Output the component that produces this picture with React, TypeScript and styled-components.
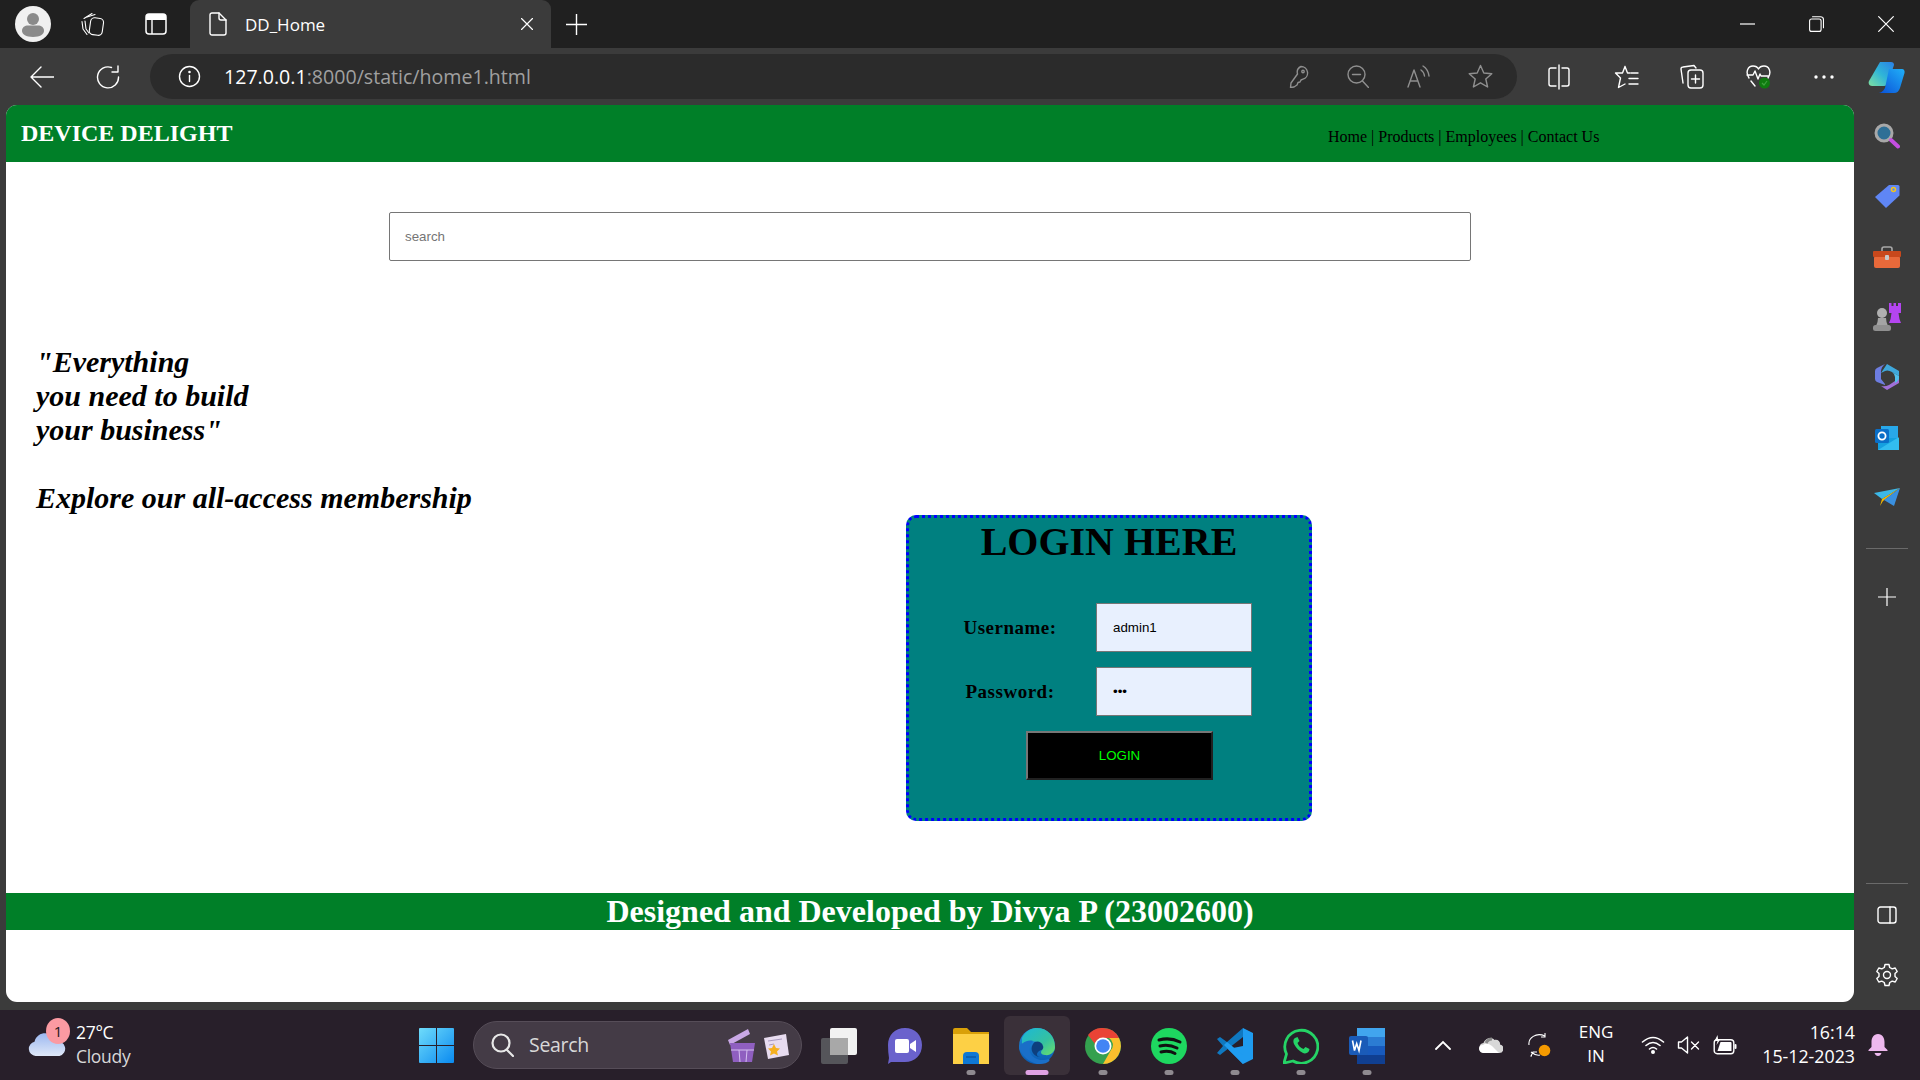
import React from "react";
import styled, { createGlobalStyle } from "styled-components";

const Global = createGlobalStyle`
  html, body { margin: 0; padding: 0; height: 100%; background: #3b3b3b; overflow: hidden; }
  * { box-sizing: border-box; }
  svg { display: block; flex: none; }
`;

const UI_FONT = `"Open Sans", "Noto Sans", sans-serif`;
const PAGE_FONT = `"Liberation Serif", "Times New Roman", serif`;
const GREEN = "#007f28";

const Screen = styled.div`
  width: 1920px;
  height: 1080px;
  display: flex;
  flex-direction: column;
  background: #3b3b3b;
  font-family: ${UI_FONT};
  overflow: hidden;
`;

/* browser chrome */
const TitleBar = styled.div`
  height: 48px;
  background: #202020;
  display: flex;
  align-items: center;
  padding-left: 15px;
`;
const Avatar = styled.div`
  width: 36px;
  height: 36px;
  border-radius: 50%;
  background: #f0f0f0;
  overflow: hidden;
`;
const TitleIcon = styled.div<{ $left: number }>`
  margin-left: ${(p) => p.$left}px;
  display: flex;
`;
const Tab = styled.div`
  width: 361px;
  height: 48px;
  margin-left: 23px;
  background: #3b3b3b;
  border-radius: 9px 9px 0 0;
  display: flex;
  align-items: center;
  padding: 0 18px 0 19px;
  color: #fff;
  font-size: 17px;
`;
const TabTitle = styled.span`
  margin-left: 18px;
  flex: 1;
`;
const WindowControls = styled.div`
  margin-left: auto;
  display: flex;
  align-items: center;
  padding-right: 26px;
  gap: 54px;
`;
const Toolbar = styled.div`
  height: 57px;
  display: flex;
  align-items: center;
  padding: 0 0 0 30px;
`;
const ToolSlot = styled.div<{ $left?: number }>`
  margin-left: ${(p) => p.$left ?? 0}px;
  display: flex;
`;
const AddressPill = styled.div`
  flex: none;
  width: 1367px;
  height: 45px;
  margin-left: 30px;
  margin-top: -1px;
  border-radius: 23px;
  background: #2b2b2b;
  display: flex;
  align-items: center;
  padding: 0 24px 0 28px;
`;
const Url = styled.div`
  margin-left: 23px;
  font-size: 19.6px;
  color: #a0a0a0;
  white-space: nowrap;
  b { font-weight: 400; color: #fff; }
`;
const PillTools = styled.div`
  margin-left: auto;
  display: flex;
  align-items: center;
  gap: 38px;
`;

/* middle */
const Middle = styled.div`
  flex: 1;
  display: flex;
  min-height: 0;
`;
const Page = styled.main`
  width: 1848px;
  height: 897px;
  margin-left: 6px;
  background: #fff;
  border-radius: 11px;
  overflow: hidden;
  font-family: ${PAGE_FONT};
  color: #000;
`;
const NavBar = styled.header`
  height: 57px;
  background: ${GREEN};
  display: flex;
  align-items: center;
  padding-left: 15px;
`;
const Brand = styled.div`
  font-size: 24px;
  font-weight: 700;
  color: #fff;
  width: 1307px;
`;
const NavLinks = styled.nav`
  font-size: 16px;
  white-space: nowrap;
  margin-top: 6px;
  a { color: #000; text-decoration: none; }
`;
const SearchRow = styled.div`
  display: flex;
  justify-content: center;
  padding-top: 50px;
`;
const SearchInput = styled.input`
  width: 1082px;
  height: 49px;
  border: 1px solid #767676;
  border-radius: 2px;
  padding: 0 15px;
  font: 13.33px "Liberation Sans", Arial, sans-serif;
  background: #fff;
  &::placeholder { color: #757575; }
`;
const Slogan = styled.div`
  margin-top: 84px;
  padding-left: 30px;
  font-size: 30px;
  line-height: 34px;
  font-weight: 700;
  font-style: italic;
  height: 170px;
`;
const LoginCard = styled.form`
  width: 406px;
  height: 306px;
  margin-left: 900px;
  background: #008080;
  border: 3px dotted #0000ff;
  border-radius: 10px;
`;
const LoginTitle = styled.h1`
  margin: 0;
  padding-top: 1px;
  text-align: center;
  font-size: 40px;
  line-height: 46px;
  font-weight: 700;
  color: #000;
`;
const FormGrid = styled.div`
  margin: 38px 0 0 15px;
  display: grid;
  grid-template-columns: 172px 156px;
  row-gap: 15px;
  align-items: center;
`;
const FieldLabel = styled.label`
  text-align: center;
  font-size: 19px;
  font-weight: 700;
  letter-spacing: 0.5px;
`;
const FieldInput = styled.input`
  width: 156px;
  height: 49px;
  border: 1px solid #767676;
  padding: 0 16px;
  background: #e8f0fe;
  color: #000;
  font: 13.33px "Liberation Sans", Arial, sans-serif;
  outline: none;
`;
const LoginButton = styled.button`
  display: block;
  width: 187px;
  height: 49px;
  margin: 15px 0 0 117px;
  background: #000;
  color: #00ff00;
  border: 2px outset #767676;
  font: 13.33px "Liberation Sans", Arial, sans-serif;
`;
const Footer = styled.footer`
  margin-top: 72px;
  height: 37px;
  background: ${GREEN};
  color: #fff;
  text-align: center;
  font-size: 32px;
  font-weight: 700;
  line-height: 37px;
`;

/* edge sidebar */
const Sidebar = styled.aside`
  width: 66px;
  display: flex;
  flex-direction: column;
  align-items: center;
  padding-top: 1px;
`;
const SideCell = styled.div<{ $top?: number }>`
  height: 60.3px;
  width: 100%;
  margin-top: ${(p) => p.$top ?? 0}px;
  display: flex;
  align-items: center;
  justify-content: center;
`;
const SideRule = styled.div<{ $top: number }>`
  width: 42px;
  height: 1px;
  background: #6a6a6a;
  margin-top: ${(p) => p.$top}px;
`;
const SideBottom = styled.div`
  margin-top: auto;
  width: 100%;
  display: flex;
  flex-direction: column;
  align-items: center;
  padding-bottom: 5px;
`;

/* taskbar */
const Taskbar = styled.div`
  height: 70px;
  background: #281f2a;
  display: flex;
  align-items: center;
  color: #fff;
  font-family: ${UI_FONT};
`;
const Weather = styled.div`
  width: 403px;
  padding-left: 28px;
  display: flex;
  align-items: center;
  position: relative;
`;
const WeatherCloud = styled.div`
  margin-top: -3px;
`;
const WeatherText = styled.div`
  margin: -2px 0 0 10px;
  font-size: 17.5px;
  line-height: 24px;
  letter-spacing: -0.3px;
  span { display: block; color: #d8d8d8; }
`;
const Badge = styled.div`
  position: absolute;
  left: 46px;
  top: -4px;
  width: 24px;
  height: 26px;
  border-radius: 50%;
  background: #fb9aa2;
  color: #201820;
  font-size: 15px;
  line-height: 26px;
  text-align: center;
`;
const TaskCell = styled.div<{ $active?: boolean }>`
  width: 66px;
  height: 59px;
  margin-top: 1px;
  border-radius: 6px;
  background: ${(p) => (p.$active ? "#3a3039" : "transparent")};
  display: flex;
  align-items: center;
  justify-content: center;
  position: relative;
`;
const RunDot = styled.div<{ $active?: boolean }>`
  position: absolute;
  left: 50%;
  bottom: 0;
  transform: translateX(-50%);
  width: ${(p) => (p.$active ? 23 : 9)}px;
  height: 5px;
  border-radius: 3px;
  background: ${(p) => (p.$active ? "#e0a2e4" : "#8f8a90")};
`;
const TaskSearch = styled.div`
  width: 329px;
  height: 48px;
  margin: 0 4px;
  border-radius: 24px;
  background: #443b46;
  border: 1px solid #564d58;
  display: flex;
  align-items: center;
  padding: 0 12px 0 17px;
  font-size: 19.5px;
  color: #d8d8d8;
`;
const TaskSearchLabel = styled.span`
  margin: -2px 0 0 15px;
  flex: 1;
  letter-spacing: -0.3px;
`;
const Tray = styled.div`
  display: flex;
  align-items: center;
  padding-left: 35px;
`;
const TrayItem = styled.div<{ $gap: number }>`
  margin-left: ${(p) => p.$gap}px;
  display: flex;
`;
const Lang = styled.div`
  width: 50px;
  margin: -2px 0 0 20px;
  text-align: center;
  font-size: 17px;
  line-height: 24px;
`;
const Clock = styled.div`
  width: 118px;
  margin-top: -2px;
  text-align: right;
  font-size: 17.8px;
  line-height: 24px;
  white-space: nowrap;
`;

const S = { fill: "none", stroke: "#fff", strokeWidth: 1.4, strokeLinecap: "round" as const, strokeLinejoin: "round" as const };
const G = { ...S, stroke: "#8f8f8f" };

const AvatarIcon = () => (
  <svg width="36" height="36" viewBox="0 0 36 36">
    <circle cx="18" cy="13" r="6" fill="#8a8a8a" />
    <path d="M7 25c0-4 3-5.500 6-5.500h10c3 0 6 1.500 6 5.500 0 3-4 6-11 6S7 28 7 25z" fill="#8a8a8a" />
  </svg>
);
const Workspaces = () => (
  <svg width="24" height="24" viewBox="0 0 24 24" {...S} strokeWidth={1.1}>
    <path d="M3 6.500 11 1.500M1 9.500 2 17l4 5.500" />
    <path d="M6 5 14 2.500M4 9l1 8 3 4" />
    <rect x="9" y="6" width="13" height="17" rx="4" transform="rotate(8 15 14)" />
  </svg>
);
const TabsIcon = () => (
  <svg width="22" height="22" viewBox="0 0 22 22">
    <rect x="1" y="1" width="20" height="20" rx="3" fill="none" stroke="#fff" strokeWidth="1.5" />
    <path d="M1 4a3 3 0 0 1 3-3h14a3 3 0 0 1 3 3v3H1z" fill="#fff" />
    <path d="M7 7v14" stroke="#fff" strokeWidth="1.4" />
  </svg>
);
const FileIcon = () => (
  <svg width="18" height="24" viewBox="0 0 18 24" {...S}>
    <path d="M3 1h7l7 7v13a2 2 0 0 1-2 2H3a2 2 0 0 1-2-2V3a2 2 0 0 1 2-2z" />
    <path d="M10 1v5a2 2 0 0 0 2 2h5" />
  </svg>
);
const CloseX = ({ size = 12 }: { size?: number }) => (
  <svg width={size} height={size} viewBox="0 0 12 12" {...S} strokeWidth={size > 12 ? 0.9 : 1.2}>
    <path d="M.5.5l11 11M11.500.5l-11 11" />
  </svg>
);
const PlusIcon = ({ size = 21 }: { size?: number }) => (
  <svg width={size} height={size} viewBox="0 0 21 21" {...S}>
    <path d="M10.500 0v21M0 10.500h21" />
  </svg>
);
const MinIcon = () => (
  <svg width="15" height="2" viewBox="0 0 15 2"><path d="M0 1h15" stroke="#fff" strokeWidth="1.2" /></svg>
);
const RestoreIcon = () => (
  <svg width="15" height="16" viewBox="0 0 15 16" {...S} strokeWidth={1.1}>
    <rect x=".6" y="3" width="11.500" height="12.400" rx="2" />
    <path d="M3.500.7h8a3 3 0 0 1 3 3v8" />
  </svg>
);
const BackIcon = () => (
  <svg width="24" height="22" viewBox="0 0 24 22" {...S}>
    <path d="M11 1 1 11l10 10M1 11h23" />
  </svg>
);
const ReloadIcon = () => (
  <svg width="24" height="24" viewBox="0 0 24 24" {...S}>
    <path d="M15.500 2.500A10.500 10.500 0 1 0 22.500 12M22 1v6h-6" />
  </svg>
);
const InfoIcon = () => (
  <svg width="23" height="23" viewBox="0 0 23 23" {...S}>
    <circle cx="11.500" cy="11.500" r="10" />
    <path d="M11.500 10.500v6" />
    <circle cx="11.500" cy="7" r=".6" />
  </svg>
);
const KeyIcon = () => (
  <svg width="20" height="23" viewBox="0 0 20 23" {...G}>
    <path d="M12 1.500a6.500 6.500 0 0 1 2 12.700l-2 .8-1 2-2 .5-1 2.500-3 2-3.500.5.500-4.500L8.500 9A6.500 6.500 0 0 1 12 1.500z" />
    <circle cx="14" cy="6.500" r="1.200" />
  </svg>
);
const ZoomOutIcon = () => (
  <svg width="22" height="23" viewBox="0 0 22 23" {...G}>
    <circle cx="9.500" cy="9.500" r="8.500" />
    <path d="M5.500 9.500h8M15.500 16l6 6.500" />
  </svg>
);
const ReadAloudIcon = () => (
  <svg width="23" height="24" viewBox="0 0 23 24" {...G}>
    <path d="M1 23 7 6l6 17M3 17h8" />
    <path d="M14 6q3 2 3.500 6M16 2q5 3 6 10" />
  </svg>
);
const StarIcon = () => (
  <svg width="25" height="24" viewBox="0 0 25 24" {...G}>
    <path d="M12.500 1.500 15.800 9l8 .7-6 5.300 1.800 8-7.100-4.200L5.400 23l1.800-8-6-5.300 8-.7z" />
  </svg>
);
const SplitIcon = () => (
  <svg width="22" height="26" viewBox="0 0 22 26" {...S}>
    <path d="M8 4H3a2 2 0 0 0-2 2v14a2 2 0 0 0 2 2h5M14 4h5a2 2 0 0 1 2 2v14a2 2 0 0 1-2 2h-5" />
    <path d="M11 1v24" />
  </svg>
);
const FavoritesIcon = () => (
  <svg width="25" height="24" viewBox="0 0 25 24" {...S}>
    <path d="M11 1.500 13.500 8H16M8.500 8H1.500l5 5-2 9.500L11 19M11 1.500 8.500 8" />
    <path d="M17 8h7M15 13.500h9M15 19h9" />
  </svg>
);
const CollectionsIcon = () => (
  <svg width="24" height="25" viewBox="0 0 24 25" {...S}>
    <path d="M16 4 14 1.500 3 3a2 2 0 0 0-2 2l2 14" />
    <rect x="8" y="6" width="15" height="18" rx="3" />
    <path d="M15.500 11v8M11.500 15h8" />
  </svg>
);
const HealthIcon = () => (
  <svg width="25" height="25" viewBox="0 0 25 25">
    <path d="M3 14C-1 8 2 2 7 2c3 0 5 2 5.500 3C13 4 15 2 18 2c5 0 8 6 4 12M1 11h6l2-4 3 8 2-5 1 2h8M5 17l4 5" {...S} />
    <circle cx="18.500" cy="19" r="5.500" fill="#0f7b0f" />
    <path d="M16 19l2 2 3-4" fill="none" stroke="#3ea03e" strokeWidth="1.200" />
  </svg>
);
const DotsIcon = () => (
  <svg width="20" height="4" viewBox="0 0 20 4" fill="#fff">
    <circle cx="2" cy="2" r="1.700" /><circle cx="10" cy="2" r="1.700" /><circle cx="18" cy="2" r="1.700" />
  </svg>
);
const CopilotIcon = () => (
  <svg width="37" height="32" viewBox="0 0 37 32">
    <defs>
      <linearGradient id="cpA" x1="0" y1="1" x2="1" y2="0"><stop offset="0" stopColor="#7fe0a0" /><stop offset=".5" stopColor="#2fb5d8" /><stop offset="1" stopColor="#2a80e8" /></linearGradient>
      <linearGradient id="cpB" x1="0" y1="1" x2="1" y2="0"><stop offset="0" stopColor="#0a50d8" /><stop offset="1" stopColor="#20b0f8" /></linearGradient>
    </defs>
    <path d="M12 1h11c2 0 3 1 3 3L20 22c-1 2-2 3-4 3H4c-3 0-4-3-3-5z" fill="url(#cpA)" />
    <path d="M21 8h13c2 0 3 2 2.500 4L32 27c-1 3-3 5-6 5H10c2 0 5-1 7-5z" fill="url(#cpB)" />
  </svg>
);

const MagnifierIcon = () => (
  <svg width="26" height="26" viewBox="0 0 26 26">
    <circle cx="10" cy="10" r="8" fill="#2e6f96" stroke="#a8a8a8" strokeWidth="3" />
    <path d="M17 17l7 6.500" stroke="#c44ee0" strokeWidth="4" strokeLinecap="round" />
  </svg>
);
const TagIcon = () => (
  <svg width="26" height="26" viewBox="0 0 26 26">
    <path d="M15 2h9a1.500 1.500 0 0 1 1.500 1.500v9L12 25 1 14z" fill="#5f86f5" />
    <circle cx="19.500" cy="6.500" r="2" fill="none" stroke="#f5c518" strokeWidth="1.500" />
  </svg>
);
const ToolboxIcon = () => (
  <svg width="28" height="22" viewBox="0 0 28 22">
    <path d="M9 6V3a2 2 0 0 1 2-2h6a2 2 0 0 1 2 2v3" fill="none" stroke="#a8a8a8" strokeWidth="1.600" />
    <rect x="1" y="10" width="26" height="12" rx="2" fill="#e8693a" />
    <rect y="5" width="28" height="6" rx="1" fill="#c8481c" />
    <rect x="12" y="9" width="4" height="5" rx="1" fill="#c8c8c8" />
  </svg>
);
const ChessIcon = () => (
  <svg width="28" height="28" viewBox="0 0 28 28">
    <path d="M16 20q2-4 2.500-10H16V0h2.500v3h2V0h2.500v3h2V0H28v10h-2.500q.5 6 2.500 10z" fill="#b445f0" />
    <circle cx="9" cy="10" r="5" fill="#b0b0b0" />
    <path d="M5 15h8q0 4 2 8H3q2-4 2-8z" fill="#a4a4a4" />
    <rect x="0" y="22" width="18" height="6" rx="2.500" fill="#909090" />
  </svg>
);
const M365Icon = () => (
  <svg width="24" height="26" viewBox="0 0 24 26">
    <path d="M12 0 24 7v5l-7-4q-5-3-9 0l-2 1z" fill="#3fa8dc" />
    <path d="M0 7q0-2 2-3l8-4q-4 3-4 8v7l4 5v1L2 18q-2-1-2-3z" fill="#6d7de0" />
    <path d="M24 12v7l-12 7-6-4q4 1 8-1l6-4q3-2 4-5z" fill="#a070d8" />
    <path d="M17 8l7 4v3q-2 3-4 4v-6q0-3-3-5z" fill="#50c0ec" />
  </svg>
);
const OutlookIcon = () => (
  <svg width="24" height="24" viewBox="0 0 24 24">
    <rect x="6" y="0" width="17" height="12" fill="#28a8ea" />
    <path d="M3 12 24 12v12H3z" fill="#14a0e0" />
    <path d="M3 24l21-13v13z" fill="#50d9ff" opacity=".5" />
    <rect y="3" width="14" height="14" rx="1.500" fill="#0a6fc8" />
    <circle cx="7" cy="10" r="3.600" fill="none" stroke="#fff" strokeWidth="1.800" />
  </svg>
);
const SendIcon = () => (
  <svg width="26" height="20" viewBox="0 0 26 20">
    <path d="M0 5 26 0 8 11z" fill="#3cb8e8" />
    <path d="M26 0 8 11l-2 7 3-5z" fill="#f5b800" />
    <path d="M26 0 20 18 10 12z" fill="#3a90e0" />
  </svg>
);
const SideToggle = () => (
  <svg width="20" height="18" viewBox="0 0 20 18" {...S}>
    <rect x="1" y="1" width="18" height="16" rx="2.500" />
    <path d="M13 1v16" />
  </svg>
);
const GearIcon = () => (
  <svg width="24" height="24" viewBox="0 0 24 24" {...S}>
    <circle cx="12" cy="12" r="3.500" />
    <path d="M10 1.500h4l.7 3 2.500 1.400 3-.9 2 3.500-2.200 2.100v2.800l2.200 2.100-2 3.500-3-.9-2.500 1.400-.7 3h-4l-.7-3-2.500-1.400-3 .9-2-3.500 2.200-2.100v-2.800L1.800 8.500l2-3.500 3 .9 2.500-1.400z" />
  </svg>
);

const CloudWeather = () => (
  <svg width="38" height="25" viewBox="0 0 36 24">
    <defs><linearGradient id="cw" x1="0" y1="0" x2="0" y2="1"><stop offset="0" stopColor="#9cb8f0" /><stop offset="1" stopColor="#dfe8f8" /></linearGradient></defs>
    <path d="M7 24a7 7 0 0 1-1-13.800C8 3 15 1 20 3c3 1 6 4 6.500 7A7 7 0 0 1 30 24z" fill="url(#cw)" />
  </svg>
);
const WinLogo = () => (
  <svg width="35" height="35" viewBox="0 0 35 35">
    <defs><linearGradient id="wl" x1="0" y1="0" x2="1" y2="1"><stop offset="0" stopColor="#6fdcfb" /><stop offset="1" stopColor="#0a8af0" /></linearGradient></defs>
    <path d="M1 0h16v17H0V1a1 1 0 0 1 1-1zM18 0h16a1 1 0 0 1 1 1v16H18zM0 18h17v17H1a1 1 0 0 1-1-1zM18 18h17v16a1 1 0 0 1-1 1H18z" fill="url(#wl)" />
  </svg>
);
const TaskSearchIcon = () => (
  <svg width="23" height="24" viewBox="0 0 23 24" fill="none" stroke="#e8e8e8" strokeWidth="2.200" strokeLinecap="round">
    <circle cx="10" cy="10" r="8.500" /><path d="M16 17l6 6" />
  </svg>
);
const SearchDoodle = () => (
  <svg width="62" height="34" viewBox="0 0 62 34">
    <path d="M1 12 21 1l2 5L3 17z" fill="#c9a8e6" />
    <path d="M3 15h25l-3 19H6z" fill="#8f5fc0" />
    <path d="M4 22h23M12 22l1 12M20 22l-1 12" stroke="#d4bff0" strokeWidth="1" />
    <path d="M37 10l22-4 3 21-21 4z" fill="#e8dcf0" />
    <path d="M41 13l14-2M42 17l5-1" stroke="#a89ac0" strokeWidth="1" />
    <path d="M47 16l2 4 4 .5-3 3 1 4-4-2-4 2 1-4-3-3 4-.5z" fill="#f5b020" />
  </svg>
);
const TaskViewIcon = () => (
  <svg width="36" height="36" viewBox="0 0 36 36">
    <rect y="10" width="27" height="26" rx="2" fill="#55555a" />
    <rect x="9" y="0" width="27" height="27" rx="2" fill="#f2f2f2" />
    <rect x="9" y="10" width="18" height="17" fill="#a8a8a8" />
  </svg>
);
const MeetIcon = () => (
  <svg width="34" height="36" viewBox="0 0 34 36">
    <path d="M17 0c10 0 17 7 17 17s-7 17-17 17H3l-3 2 1-6Q0 24 0 17C0 7 7 0 17 0z" fill="#6a62cc" />
    <rect x="7" y="11" width="14" height="14" rx="2" fill="#fff" />
    <path d="M22 16l6-4v12l-6-4z" fill="#fff" />
  </svg>
);
const FolderIcon = () => (
  <svg width="36" height="36" viewBox="0 0 36 36">
    <path d="M0 2a2 2 0 0 1 2-2h12l4 4h18v10H0z" fill="#d9a008" />
    <path d="M0 6h36v30H0z" fill="#fdd045" />
    <path d="M10 28a4 4 0 0 1 4-4h8a4 4 0 0 1 4 4v8H10z" fill="#0f78d4" />
    <path d="M13 29h10" stroke="#0a5aa8" strokeWidth="1.500" />
  </svg>
);
const EdgeIcon = () => (
  <svg width="36" height="36" viewBox="0 0 36 36">
    <defs>
      <linearGradient id="eg" x1="0" y1="0" x2="1" y2="1"><stop offset="0" stopColor="#1bb8d8" /><stop offset=".6" stopColor="#35c1a0" /><stop offset="1" stopColor="#6de06a" /></linearGradient>
      <linearGradient id="eb" x1="0" y1="0" x2="0" y2="1"><stop offset="0" stopColor="#2192e0" /><stop offset="1" stopColor="#0a5ab0" /></linearGradient>
    </defs>
    <circle cx="18" cy="18" r="18" fill="url(#eb)" />
    <path d="M3 10C7 2 14 0 18 0c11 0 18 9 18 19 0 5-5 9-10 8-4 0-5-3-3-5 1-3 0-7-5-8-6-2-12 1-15 5z" fill="url(#eg)" />
    <path d="M14 13c-5 4-5 13 2 17 3 2 9 3 13 1 2 0 2 2 0 3-3 2-7 2-11 2-8-2-15-8-18-16 1-4 8-9 14-7z" fill="#1a6fc8" />
    <path d="M14 16c2-4 9-3 10 2 1 2-1 4-1 4-4 0-8 6-2 7-6 0-11-7-7-13z" fill="#0d3f7e" />
  </svg>
);
const ChromeIcon = () => (
  <svg width="36" height="36" viewBox="0 0 36 36">
    <circle cx="18" cy="18" r="18" fill="#34a04f" />
    <path d="M18 0a18 18 0 0 1 16 10H18a8 8 0 0 0-8 6L3 7a18 18 0 0 1 15-7z" fill="#ea4335" />
    <path d="M34 10a18 18 0 0 1-16 26l8-14a8 8 0 0 0-2-12z" fill="#fbc02d" />
    <circle cx="18" cy="18" r="8.500" fill="#fff" />
    <circle cx="18" cy="18" r="6.800" fill="#4285f4" />
  </svg>
);
const SpotifyIcon = () => (
  <svg width="36" height="36" viewBox="0 0 36 36">
    <circle cx="18" cy="18" r="18" fill="#1ed760" />
    <path d="M8 12q11-3 21 2M9 18q9-2 17 2M10 24q8-2 14 1.500" fill="none" stroke="#111" strokeWidth="3" strokeLinecap="round" />
  </svg>
);
const VsCodeIcon = () => (
  <svg width="36" height="36" viewBox="0 0 36 36">
    <path d="M26 0 36 5v26l-10 5L11 21l15-3z" fill="#1f9cf0" />
    <path d="M26 0 10 14 3 9 0 11l6 7-6 7 3 2 23-18z" fill="#0f78c0" />
    <path d="M26 27 10 14l-3 3 19 19z" fill="#1f9cf0" />
  </svg>
);
const WhatsAppIcon = () => (
  <svg width="36" height="36" viewBox="0 0 36 36">
    <path d="M1 35l2.500-9A16.500 16.500 0 1 1 10 33z" fill="none" stroke="#25d366" strokeWidth="2.800" strokeLinejoin="round" />
    <path d="M12 10c-2 1-2 4-1 6 2 4 5 7 9 9 2 1 5 0 6-2l.5-2-4-2-2 2c-3-1-5-3-6-6l2-2-2-4z" fill="#25d366" />
  </svg>
);
const WordIcon = () => (
  <svg width="36" height="36" viewBox="0 0 36 36">
    <rect x="8" y="0" width="28" height="36" rx="2" fill="#2b7cd3" />
    <rect x="8" y="0" width="28" height="9" fill="#41a5ee" />
    <rect x="8" y="18" width="28" height="9" fill="#185abd" />
    <rect x="8" y="27" width="28" height="9" fill="#103f91" />
    <rect y="8" width="19" height="19" rx="2" fill="#1a5bb8" />
    <path d="M3.500 12.500l2 10 2.200-7 2.300 7 2-10" fill="none" stroke="#fff" strokeWidth="1.600" />
  </svg>
);

const Chevron = () => (
  <svg width="16" height="10" viewBox="0 0 16 10" fill="none" stroke="#fff" strokeWidth="1.800" strokeLinecap="round">
    <path d="M1 9l7-7 7 7" />
  </svg>
);
const OneDrive = () => (
  <svg width="24" height="16" viewBox="0 0 24 16">
    <path d="M5 16a5 5 0 0 1-.5-9.900C6 1.500 12-1 15.500 3 19 2 21.500 5 21 7.500a4.300 4.300 0 0 1-1 8.500z" fill="#d8d8d8" />
    <path d="M4 8Q8 5 13 9l7 7H5a5 5 0 0 1-5-4 4 4 0 0 1 4-4z" fill="#ffffff" />
    <path d="M13 2q-4 0-6 4" stroke="#8a8a8a" strokeWidth="3" fill="none" />
  </svg>
);
const SyncIcon = () => (
  <svg width="24" height="24" viewBox="0 0 24 24">
    <path d="M2 12C1 5 9-1 18 3M18 0v4h-4M5 23h-1l2-4h4M4 19q5 4 9 3" fill="none" stroke="#fff" strokeWidth="1.100" />
    <circle cx="17.500" cy="17.500" r="5.800" fill="#f59a00" />
  </svg>
);
const WifiIcon = () => (
  <svg width="24" height="18" viewBox="0 0 23 18" fill="none" stroke="#fff" strokeWidth="1.600" strokeLinecap="round">
    <path d="M1 6q10.500-9 21 0M4.500 9.500q7-6 14 0M8 13q3.500-3 7 0" />
    <circle cx="11.500" cy="16" r="1.200" fill="#fff" />
  </svg>
);
const MuteIcon = () => (
  <svg width="23" height="18" viewBox="0 0 22 18" {...S}>
    <path d="M1 6v6h3l6 5V1L4 6z" />
    <path d="M14 6l7 7M21 6l-7 7" />
  </svg>
);
const BatteryIcon = () => (
  <svg width="24" height="20" viewBox="0 0 23 20">
    <rect x=".7" y="4.700" width="19.600" height="14" rx="3" fill="none" stroke="#fff" strokeWidth="1.400" />
    <path d="M4 16 7 7h10q1 0 1 1v8z" fill="#fff" />
    <path d="M4 0 1 6h3L3 10l4-6H4.500z" fill="#fff" />
    <rect x="21" y="9" width="2" height="5" rx="1" fill="#fff" />
  </svg>
);
const BellIcon = () => (
  <svg width="20" height="22" viewBox="0 0 19 22" fill="#eeb8ee">
    <path d="M9.500 0C14 0 16 4 16 8v5l3 3v1H0v-1l3-3V8c0-4 2-8 6.500-8z" />
    <path d="M6 19h7q-1 3-3.500 3T6 19z" />
  </svg>
);

const sideIcons = [MagnifierIcon, TagIcon, ToolboxIcon, ChessIcon, M365Icon, OutlookIcon, SendIcon];
const pinned = [
  { Icon: TaskViewIcon },
  { Icon: MeetIcon },
  { Icon: FolderIcon, running: true },
  { Icon: EdgeIcon, running: true, active: true },
  { Icon: ChromeIcon, running: true },
  { Icon: SpotifyIcon, running: true },
  { Icon: VsCodeIcon, running: true },
  { Icon: WhatsAppIcon, running: true },
  { Icon: WordIcon, running: true },
];

export default function App() {
  return (
    <Screen>
      <Global />
      <TitleBar>
        <Avatar><AvatarIcon /></Avatar>
        <TitleIcon $left={30}><Workspaces /></TitleIcon>
        <TitleIcon $left={40}><TabsIcon /></TitleIcon>
        <Tab>
          <FileIcon />
          <TabTitle>DD_Home</TabTitle>
          <CloseX />
        </Tab>
        <TitleIcon $left={15}><PlusIcon /></TitleIcon>
        <WindowControls>
          <MinIcon />
          <RestoreIcon />
          <CloseX size={16} />
        </WindowControls>
      </TitleBar>

      <Toolbar>
        <BackIcon />
        <ToolSlot $left={42}><ReloadIcon /></ToolSlot>
        <AddressPill>
          <InfoIcon />
          <Url><b>127.0.0.1</b>:8000/static/home1.html</Url>
          <PillTools>
            <KeyIcon />
            <ZoomOutIcon />
            <ReadAloudIcon />
            <StarIcon />
          </PillTools>
        </AddressPill>
        <ToolSlot $left={31}><SplitIcon /></ToolSlot>
        <ToolSlot $left={44}><FavoritesIcon /></ToolSlot>
        <ToolSlot $left={41}><CollectionsIcon /></ToolSlot>
        <ToolSlot $left={42}><HealthIcon /></ToolSlot>
        <ToolSlot $left={43}><DotsIcon /></ToolSlot>
        <ToolSlot $left={34}><CopilotIcon /></ToolSlot>
      </Toolbar>

      <Middle>
        <Page>
          <NavBar>
            <Brand>DEVICE DELIGHT</Brand>
            <NavLinks>
              <a href="#home">Home</a> | <a href="#products">Products</a> | <a href="#employees">Employees</a> | <a href="#contact">Contact Us</a>
            </NavLinks>
          </NavBar>
          <SearchRow>
            <SearchInput placeholder="search" />
          </SearchRow>
          <Slogan>
            "Everything<br />
            you need to build<br />
            your business"<br />
            <br />
            Explore our all-access membership
          </Slogan>
          <LoginCard onSubmit={(e) => e.preventDefault()}>
            <LoginTitle>LOGIN HERE</LoginTitle>
            <FormGrid>
              <FieldLabel htmlFor="username">Username:</FieldLabel>
              <FieldInput id="username" defaultValue="admin1" />
              <FieldLabel htmlFor="password">Password:</FieldLabel>
              <FieldInput id="password" type="password" defaultValue="abc" />
            </FormGrid>
            <LoginButton type="submit">LOGIN</LoginButton>
          </LoginCard>
          <Footer>Designed and Developed by Divya P (23002600)</Footer>
        </Page>
        <Sidebar>
          {sideIcons.map((Icon, i) => (
            <SideCell key={i}><Icon /></SideCell>
          ))}
          <SideRule $top={20} />
          <SideCell $top={18}><PlusIcon size={18} /></SideCell>
          <SideBottom>
            <SideRule $top={0} />
            <SideCell><SideToggle /></SideCell>
            <SideCell><GearIcon /></SideCell>
          </SideBottom>
        </Sidebar>
      </Middle>

      <Taskbar>
        <Weather>
          <WeatherCloud><CloudWeather /></WeatherCloud>
          <Badge>1</Badge>
          <WeatherText>27°C<span>Cloudy</span></WeatherText>
        </Weather>
        <TaskCell><WinLogo /></TaskCell>
        <TaskSearch>
          <TaskSearchIcon />
          <TaskSearchLabel>Search</TaskSearchLabel>
          <SearchDoodle />
        </TaskSearch>
        {pinned.map(({ Icon, running, active }, i) => (
          <TaskCell key={i} $active={active}>
            <Icon />
            {running && <RunDot $active={active} />}
          </TaskCell>
        ))}
        <Tray>
          <Chevron />
          <TrayItem $gap={28}><OneDrive /></TrayItem>
          <TrayItem $gap={24}><SyncIcon /></TrayItem>
          <Lang>ENG<br />IN</Lang>
          <TrayItem $gap={20}><WifiIcon /></TrayItem>
          <TrayItem $gap={12}><MuteIcon /></TrayItem>
          <TrayItem $gap={13}><BatteryIcon /></TrayItem>
          <Clock>16:14<br />15-12-2023</Clock>
          <TrayItem $gap={13}><BellIcon /></TrayItem>
        </Tray>
      </Taskbar>
    </Screen>
  );
}
